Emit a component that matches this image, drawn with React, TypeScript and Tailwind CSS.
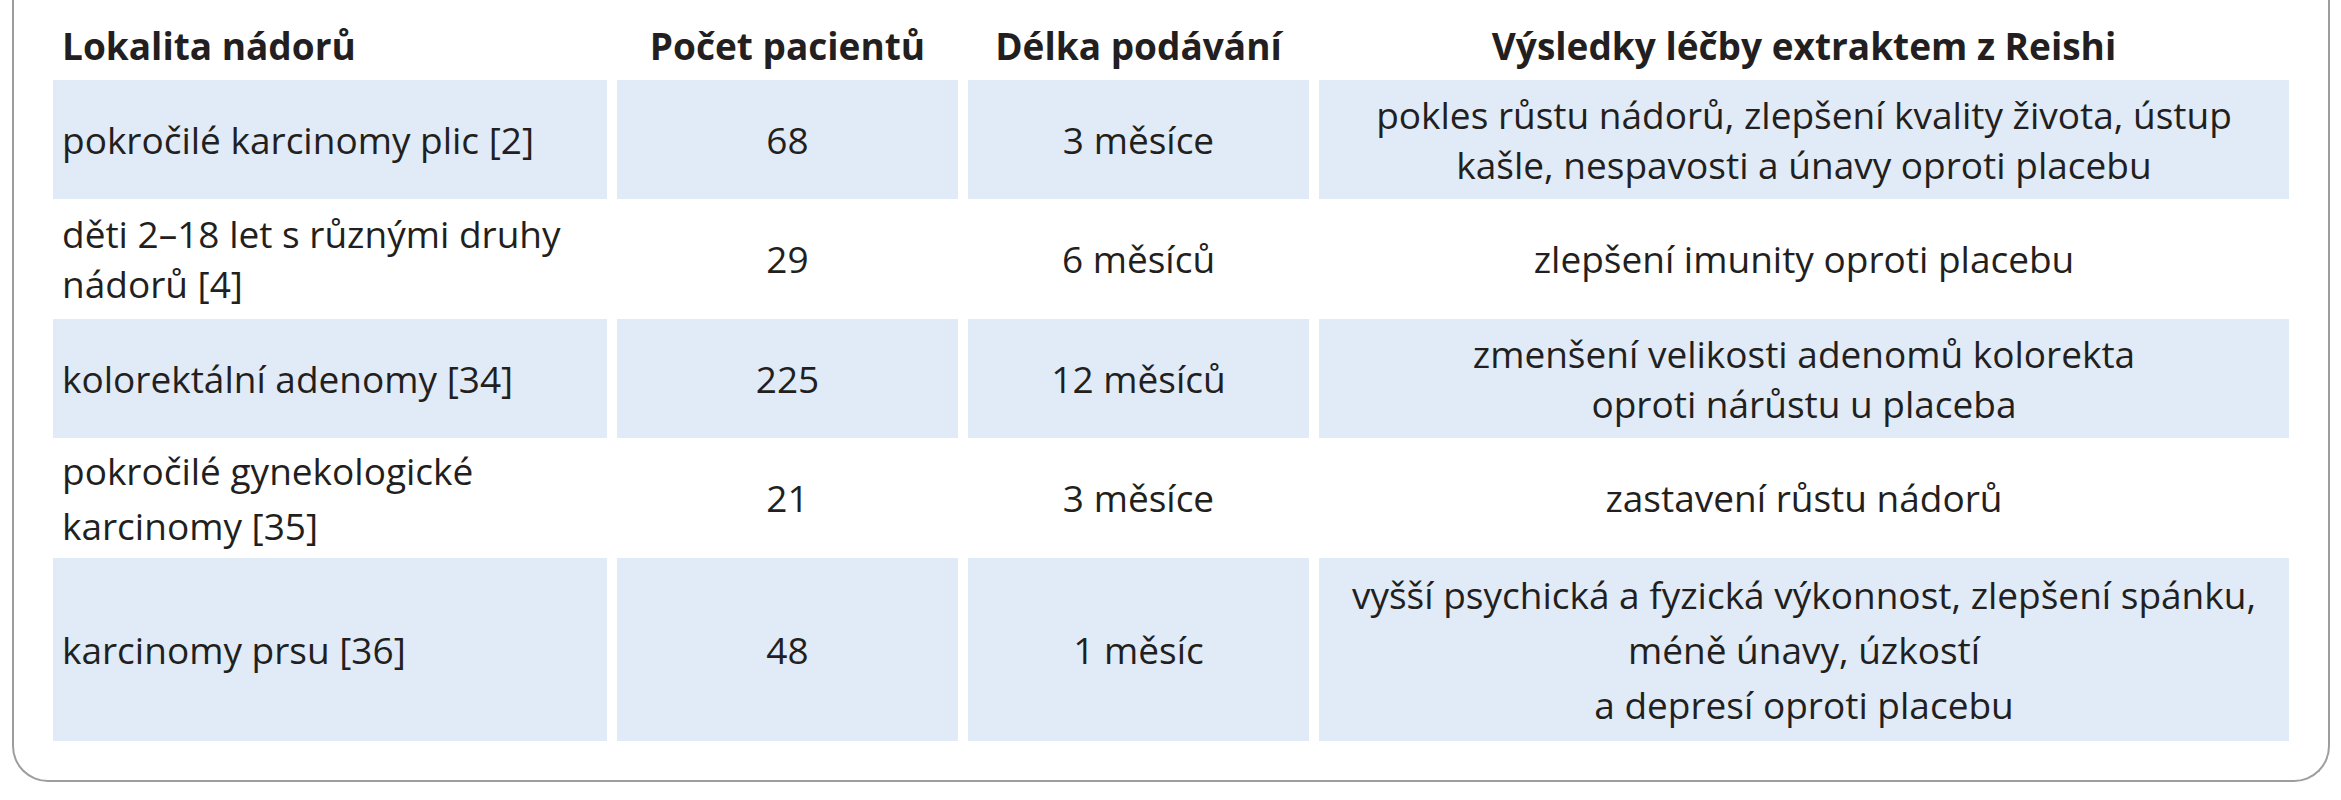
type Row = {
  site: string[];
  count: string;
  length: string;
  result: string[];
  height: string;
  siteLeading?: string;
  resultLeading?: string;
  shaded: boolean;
};

const rows: Row[] = [
  {
    site: ['pokročilé karcinomy plic [2]'],
    count: '68',
    length: '3 měsíce',
    result: ['pokles růstu nádorů, zlepšení kvality života, ústup', 'kašle, nespavosti a únavy oproti placebu'],
    height: 'h-[119px]',
    shaded: true,
  },
  {
    site: ['děti 2–18 let s různými druhy', 'nádorů [4]'],
    count: '29',
    length: '6 měsíců',
    result: ['zlepšení imunity oproti placebu'],
    height: 'h-[120px]',
    shaded: false,
  },
  {
    site: ['kolorektální adenomy [34]'],
    count: '225',
    length: '12 měsíců',
    result: ['zmenšení velikosti adenomů kolorekta', 'oproti nárůstu u placeba'],
    height: 'h-[119px]',
    shaded: true,
  },
  {
    site: ['pokročilé gynekologické', 'karcinomy [35]'],
    count: '21',
    length: '3 měsíce',
    result: ['zastavení růstu nádorů'],
    height: 'h-[120px]',
    siteLeading: 'leading-[55px]',
    shaded: false,
  },
  {
    site: ['karcinomy prsu [36]'],
    count: '48',
    length: '1 měsíc',
    result: ['vyšší psychická a fyzická výkonnost, zlepšení spánku,', 'méně únavy, úzkostí', 'a depresí oproti placebu'],
    height: 'h-[183px]',
    resultLeading: 'leading-[55px]',
    shaded: true,
  },
];

function Lines({ lines }: { lines: string[] }) {
  return (
    <>
      {lines.map((line, i) => (
        <span key={i} className="block whitespace-nowrap">
          {line}
        </span>
      ))}
    </>
  );
}

export default function App() {
  return (
    <div className="min-h-screen bg-white pl-[12px] font-['Open_Sans',sans-serif] text-[37px] text-[#231f20]">
      <div className="w-[2318px] rounded-b-[36px] border-x-2 border-b-2 border-[#9d9d9d] px-[39px] pb-[39px]">
        <div className="grid grid-cols-[554px_341px_341px_970px] gap-x-[10px]">
          <div className="h-[80px] pl-[9px] pt-[21px] font-bold leading-[50px]">Lokalita nádorů</div>
          <div className="h-[80px] pt-[21px] text-center font-bold leading-[50px]">Počet pacientů</div>
          <div className="h-[80px] pt-[21px] text-center font-bold leading-[50px]">Délka podávání</div>
          <div className="h-[80px] pt-[21px] text-center font-bold leading-[50px]">Výsledky léčby extraktem z Reishi</div>

          {rows.map((row, i) => {
            const bg = row.shaded ? 'bg-[#e0ebf7]' : 'bg-white';
            return (
              <div key={i} className="contents">
                <div className={`flex items-center pl-[9px] ${row.height} ${bg} ${row.siteLeading ?? 'leading-[50px]'}`}>
                  <div>
                    <Lines lines={row.site} />
                  </div>
                </div>
                <div className={`flex items-center justify-center leading-[50px] ${row.height} ${bg}`}>{row.count}</div>
                <div className={`flex items-center justify-center leading-[50px] ${row.height} ${bg}`}>{row.length}</div>
                <div className={`flex items-center justify-center text-center ${row.height} ${bg} ${row.resultLeading ?? 'leading-[50px]'}`}>
                  <div>
                    <Lines lines={row.result} />
                  </div>
                </div>
              </div>
            );
          })}
        </div>
      </div>
    </div>
  );
}
